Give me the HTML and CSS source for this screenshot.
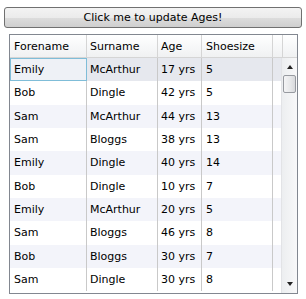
FILE: index.html
```html
<!DOCTYPE html>
<html lang="en">
<head>
    <meta charset="UTF-8">
    <title>Ages Grid</title>
    <link rel="stylesheet" href="styles.css">
</head>
<body>
    <button class="update-btn">Click me to update Ages!</button>

    <div class="grid">
        <div class="grid-head">
            <div class="cell col-fore">Forename</div>
            <div class="cell col-sur">Surname</div>
            <div class="cell col-age">Age</div>
            <div class="cell col-shoe">Shoesize</div>
            <div class="cell col-fill"></div>
            <div class="head-corner"></div>
        </div>

        <div class="grid-body">
            <div class="rows">
                <div class="row selected">
                    <div class="cell col-fore current">Emily</div>
                    <div class="cell col-sur">McArthur</div>
                    <div class="cell col-age">17 yrs</div>
                    <div class="cell col-shoe">5</div>
                </div>
                <div class="row">
                    <div class="cell col-fore">Bob</div>
                    <div class="cell col-sur">Dingle</div>
                    <div class="cell col-age">42 yrs</div>
                    <div class="cell col-shoe">5</div>
                </div>
                <div class="row alt">
                    <div class="cell col-fore">Sam</div>
                    <div class="cell col-sur">McArthur</div>
                    <div class="cell col-age">44 yrs</div>
                    <div class="cell col-shoe">13</div>
                </div>
                <div class="row">
                    <div class="cell col-fore">Sam</div>
                    <div class="cell col-sur">Bloggs</div>
                    <div class="cell col-age">38 yrs</div>
                    <div class="cell col-shoe">13</div>
                </div>
                <div class="row alt">
                    <div class="cell col-fore">Emily</div>
                    <div class="cell col-sur">Dingle</div>
                    <div class="cell col-age">40 yrs</div>
                    <div class="cell col-shoe">14</div>
                </div>
                <div class="row">
                    <div class="cell col-fore">Bob</div>
                    <div class="cell col-sur">Dingle</div>
                    <div class="cell col-age">10 yrs</div>
                    <div class="cell col-shoe">7</div>
                </div>
                <div class="row alt">
                    <div class="cell col-fore">Emily</div>
                    <div class="cell col-sur">McArthur</div>
                    <div class="cell col-age">20 yrs</div>
                    <div class="cell col-shoe">5</div>
                </div>
                <div class="row">
                    <div class="cell col-fore">Sam</div>
                    <div class="cell col-sur">Bloggs</div>
                    <div class="cell col-age">46 yrs</div>
                    <div class="cell col-shoe">8</div>
                </div>
                <div class="row alt">
                    <div class="cell col-fore">Bob</div>
                    <div class="cell col-sur">Bloggs</div>
                    <div class="cell col-age">30 yrs</div>
                    <div class="cell col-shoe">7</div>
                </div>
                <div class="row">
                    <div class="cell col-fore">Sam</div>
                    <div class="cell col-sur">Dingle</div>
                    <div class="cell col-age">30 yrs</div>
                    <div class="cell col-shoe">8</div>
                </div>
            </div>

            <!-- vertical scrollbar -->
            <div class="vscroll">
                <div class="arrow arrow-up"></div>
                <div class="thumb"></div>
                <div class="track"></div>
                <div class="arrow arrow-down"></div>
            </div>
        </div>
    </div>
</body>
</html>
```

FILE: styles.css
```css
body {
    margin: 0;
    padding: 7px 4px 0 4px;
    background: #fff;
    font-family: "DejaVu Sans", Verdana, sans-serif;
    font-size: 11px;
    color: #000;
}

.update-btn {
    display: block;
    width: 298px;
    height: 21px;
    margin: 0;
    padding: 0;
    border: 1px solid #707070;
    border-radius: 3px;
    background: linear-gradient(#f3f3f3, #ebebeb 50%, #dddddd 51%, #cfcfcf);
    font-family: inherit;
    font-size: 11px;
    color: #000;
}

.grid {
    width: 287px;
    height: 258px;
    margin: 6px 0 0 5px;
    border: 1px solid #828790;
    display: flex;
    flex-direction: column;
    overflow: hidden;
}

.grid-head {
    display: flex;
    height: 22px;
    border-bottom: 1px solid #d5d5d5;
    background: linear-gradient(#ffffff, #f7f8f9 50%, #f0f1f2);
}

.cell {
    box-sizing: border-box;
    border-right: 1px solid #c9c9c9;
    padding-left: 4px;
    white-space: nowrap;
    overflow: hidden;
    display: flex;
    align-items: center;
}

.grid-head .cell {
    border-right-color: #d5d5d5;
}

.col-fore { width: 77px; }
.col-sur  { width: 71px; padding-left: 3px; }
.col-age  { width: 44px; padding-left: 3px; }
.col-shoe { width: 71px; }
.col-fill { width: 10px; }

.head-corner {
    flex: 1;
}

.grid-body {
    flex: 1;
    display: flex;
    min-height: 0;
}

.rows {
    flex: 1;
    overflow: hidden;
}

.row {
    display: flex;
    height: 23.33px;
    background: #fff;
}

.row .cell {
    height: 100%;
}

.row.alt {
    background: #f3f4fa;
}

.row.selected {
    background: #e6e8ee;
}

.row .current {
    border: 1px solid #7fbdd8;
    background: #eef1f6;
    padding-left: 3px;
}

/* vertical scrollbar */
.vscroll {
    width: 15px;
    display: flex;
    flex-direction: column;
    align-items: center;
    border-left: 1px solid #e2e3e6;
    background: linear-gradient(90deg, #eceef0, #f8f8f9);
}

.arrow {
    width: 0;
    height: 0;
    border-left: 3px solid transparent;
    border-right: 3px solid transparent;
}

.arrow-up {
    margin-top: 7px;
    border-bottom: 4px solid #222;
}

.arrow-down {
    margin-bottom: 7px;
    border-top: 4px solid #222;
}

.thumb {
    box-sizing: border-box;
    width: 13px;
    height: 18px;
    margin-top: 6px;
    border: 1px solid #979aa0;
    border-radius: 2px;
    background: linear-gradient(90deg, #f4f4f5, #e6e7e9 60%, #d8d9dc);
}

.track {
    flex: 1;
}
```
